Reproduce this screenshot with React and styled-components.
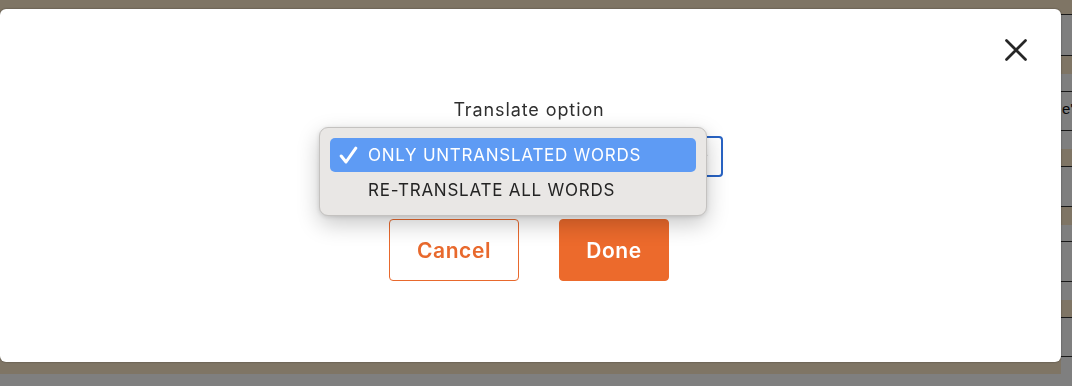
import React from "react";
import styled, { createGlobalStyle, css } from "styled-components";
import { ChevronDown } from "lucide-react";

const GlobalStyle = createGlobalStyle`
  html, body {
    margin: 0;
    padding: 0;
    background: #ffffff;
    overflow: hidden;
  }
  * {
    box-sizing: border-box;
  }
`;

// rows of the table that peeks out on the right, behind the overlay
const tableRows = [
  { h: 15, beige: true, line: true },
  { h: 41, line: true },
  { h: 18, beige: true },
  { h: 18, line: true },
  { h: 39, line: true, text: "e'" },
  { h: 18 },
  { h: 18, beige: true, line: true },
  { h: 40, line: true },
  { h: 18, beige: true },
  { h: 17, line: true },
  { h: 40, line: true },
  { h: 18 },
  { h: 18, beige: true, line: true },
  { h: 39, line: true },
];

const options = ["ONLY UNTRANSLATED WORDS", "RE-TRANSLATE ALL WORDS"];

const App = () => {
  return (
    <>
      <GlobalStyle />
      <Page>
        <MainArea>
          <Banner />
        </MainArea>
        <Table>
          {tableRows.map((row, i) => (
            <Row key={i} $h={row.h} $beige={row.beige} $line={row.line}>
              {row.text}
            </Row>
          ))}
        </Table>
      </Page>
      <Overlay />
      <Modal>
        <CloseButton aria-label="Close">
          <svg width="22" height="22" viewBox="0 0 22 22">
            <path
              d="M1.5 1.5 L20.5 20.5 M20.5 1.5 L1.5 20.5"
              stroke="#262626"
              strokeWidth="2.7"
              strokeLinecap="round"
            />
          </svg>
        </CloseButton>
        <Body>
          <Label>Translate option</Label>
          <SelectWrap>
            <SelectField>
              <ChevronDown size={14} strokeWidth={2.5} color="#333" />
            </SelectField>
            <Popup>
              {options.map((opt, i) => (
                <Option key={opt} $selected={i === 0}>
                  <Check>
                    {i === 0 && (
                      <svg width="19" height="18" viewBox="0 0 19 18">
                        <path
                          d="M2.2 10 L7 16 L16.8 2.2"
                          fill="none"
                          stroke="#ffffff"
                          strokeWidth="3"
                          strokeLinecap="round"
                          strokeLinejoin="round"
                        />
                      </svg>
                    )}
                  </Check>
                  {opt}
                </Option>
              ))}
            </Popup>
          </SelectWrap>
          <Actions>
            <Button $variant="outline">Cancel</Button>
            <Button>Done</Button>
          </Actions>
        </Body>
      </Modal>
    </>
  );
};

const Page = styled.div`
  display: flex;
  height: 100vh;
  width: 100%;
`;

const MainArea = styled.div`
  width: 1061px;
  display: flex;
  flex-direction: column;
`;

const Banner = styled.div`
  height: 374px;
  background: #feeaca;
`;

const Table = styled.div`
  flex: 1;
  display: flex;
  flex-direction: column;
  overflow: hidden;
  background: #ffffff;
`;

const Row = styled.div`
  height: ${(p) => p.$h}px;
  flex: none;
  background: ${(p) => (p.$beige ? "#feeaca" : "#ffffff")};
  border-bottom: ${(p) => (p.$line ? "1px solid #333" : "none")};
  font-family: "Liberation Sans", Arial, sans-serif;
  font-size: 15px;
  color: #111;
  padding-top: 8px;
  padding-left: 1px;
  white-space: nowrap;
`;

const Overlay = styled.div`
  position: fixed;
  inset: 0;
  background: rgba(0, 0, 0, 0.5);
`;

const Modal = styled.div`
  position: fixed;
  top: 9px;
  left: 0;
  width: 1061px;
  height: 353px;
  background: #ffffff;
  border-radius: 6px;
  box-shadow: 0 0 2px rgba(0, 0, 0, 0.45);
`;

const CloseButton = styled.button`
  position: absolute;
  top: 29px;
  right: 33px;
  width: 24px;
  height: 24px;
  padding: 0;
  border: none;
  background: none;
  display: flex;
  align-items: center;
  justify-content: center;
  cursor: pointer;
`;

const Body = styled.div`
  display: flex;
  flex-direction: column;
  align-items: center;
  padding-top: 89px;
  padding-right: 3px;
`;

const Label = styled.div`
  font-family: "Inter", "Lato", sans-serif;
  font-size: 18px;
  letter-spacing: 0.9px;
  color: #2f2f2f;
  line-height: 24px;
  margin-bottom: 14px;
`;

const SelectWrap = styled.div`
  position: relative;
  width: 388px;
`;

const SelectField = styled.div`
  height: 41px;
  border: 2px solid #2863c4;
  border-radius: 4px;
  background: #ffffff;
  display: flex;
  align-items: center;
  justify-content: flex-end;
  padding-right: 11px;
`;

const Popup = styled.div`
  position: absolute;
  top: -9px;
  left: -16px;
  width: 388px;
  height: 89px;
  padding: 10px 10px;
  background: #e9e7e5;
  border: 1px solid #c4c2c0;
  border-radius: 9px;
  box-shadow: 0 8px 22px rgba(0, 0, 0, 0.22), 0 1px 4px rgba(0, 0, 0, 0.12);
  display: flex;
  flex-direction: column;
  gap: 1px;
  z-index: 2;
`;

const Option = styled.div`
  height: 34px;
  flex: none;
  display: flex;
  align-items: center;
  border-radius: 5px;
  font-family: "Inter", "Noto Sans", sans-serif;
  font-size: 17px;
  letter-spacing: 0.75px;
  color: #242424;
  ${(p) =>
    p.$selected &&
    css`
      background: #5e9bf4;
      color: #ffffff;
    `}
`;

const Check = styled.span`
  width: 38px;
  padding-left: 9px;
  display: flex;
  align-items: center;
`;

const Actions = styled.div`
  display: flex;
  gap: 40px;
  margin-top: 42px;
`;

const Button = styled.button`
  height: 62px;
  border-radius: 4px;
  font-family: "Inter", "Lato", sans-serif;
  font-weight: 600;
  font-size: 21px;
  letter-spacing: 0.6px;
  cursor: pointer;
  ${(p) =>
    p.$variant === "outline"
      ? css`
          width: 130px;
          background: #ffffff;
          border: 1px solid #e8692d;
          color: #e8692d;
        `
      : css`
          width: 110px;
          background: #ec6a2c;
          border: 1px solid #ec6a2c;
          color: #ffffff;
        `}
`;

export default App;
